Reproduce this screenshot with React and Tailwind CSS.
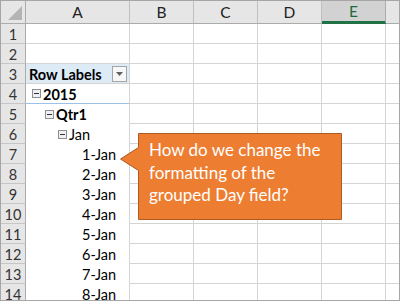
import React from "react";

const cols = ["A", "B", "C", "D", "E"];

const rowsA = {
  3: { text: "Row Labels", kind: "label" },
  4: { text: "2015", kind: "group", indent: 6, bold: true },
  5: { text: "Qtr1", kind: "group", indent: 19, bold: true },
  6: { text: "Jan", kind: "group", indent: 32 },
  7: { text: "1-Jan", indent: 56 },
  8: { text: "2-Jan", indent: 56 },
  9: { text: "3-Jan", indent: 56 },
  10: { text: "4-Jan", indent: 56 },
  11: { text: "5-Jan", indent: 56 },
  12: { text: "6-Jan", indent: 56 },
  13: { text: "7-Jan", indent: 56 },
  14: { text: "8-Jan", indent: 56 },
};

function MinusBox() {
  return (
    <span className="mr-[2px] flex h-[9px] w-[9px] items-center justify-center border border-[#8f8f8f] bg-[#eef0f4]">
      <span className="h-[1px] w-[5px] bg-[#333]" />
    </span>
  );
}

function FilterButton() {
  return (
    <span className="ml-auto mr-[2px] flex h-[16px] w-[15px] items-center justify-center border border-[#a6a6a6] bg-[#f7f7f7]">
      <svg width="7" height="4" viewBox="0 0 7 4">
        <polygon points="0,0 7,0 3.5,4" fill="#606060" />
      </svg>
    </span>
  );
}

function CellA({ row }) {
  const c = rowsA[row];
  if (!c) {
    return <div className="border-b border-r border-[#d4d4d4] bg-white" />;
  }
  if (c.kind === "label") {
    return (
      <div className="flex items-center border-b border-r border-[#d4d4d4] bg-[#ddebf7] pl-[3px] text-[14.5px] font-bold leading-[20px] text-black">
        <span className="pt-[2px]">{c.text}</span>
        <FilterButton />
      </div>
    );
  }
  return (
    <div
      className={
        "flex items-center border-r border-[#d4d4d4] bg-white text-[14.5px] leading-[20px] text-black " +
        (row === 4 ? "border-b border-b-[#9bc2e6]" : "")
      }
      style={{ paddingLeft: c.indent }}
    >
      {c.kind === "group" && <MinusBox />}
      <span className={"pt-[2px] " + (c.bold ? "font-bold" : "")}>{c.text}</span>
    </div>
  );
}

export default function App() {
  const rows = Array.from({ length: 14 }, (_, i) => i + 1);
  return (
    <div
      className="relative h-[301px] w-[400px] overflow-hidden border border-[#a6a6a6] bg-white"
      style={{ fontFamily: "Lato, 'Open Sans', sans-serif" }}
    >
      <div className="grid grid-cols-[25px_104px_64px_64px_64px_64px_1fr] grid-rows-[23px_repeat(14,20px)]">
        {/* header row */}
        <div className="relative border-b border-r border-[#ababab] bg-[#e6e6e6]">
          <svg className="absolute bottom-[3px] right-[3px]" width="14" height="14" viewBox="0 0 14 14">
            <polygon points="14,0 14,14 0,14" fill="#b4b4b4" />
          </svg>
        </div>
        {cols.map((c) => (
          <div
            key={c}
            className={
              "flex items-center justify-center border-r pt-[2px] text-[15.5px] " +
              (c === "E"
                ? "border-b-[3px] border-b-[#217346] border-r-[#ababab] bg-[#d2d2d2] text-[#1e6b3c]"
                : "border-b border-b-[#ababab] border-r-[#bfbfbf] bg-[#e6e6e6] text-[#222]")
            }
          >
            {c}
          </div>
        ))}
        <div className="border-b border-[#ababab] bg-[#e6e6e6]" />

        {rows.map((r) => (
          <React.Fragment key={r}>
            <div className="flex items-center justify-center border-b border-r border-b-[#c6c6c6] border-r-[#ababab] bg-[#e6e6e6] pt-[2px] text-[14.5px] text-[#333]">
              {r}
            </div>
            <CellA row={r} />
            <div className="border-b border-r border-[#d4d4d4]" />
            <div className="border-b border-r border-[#d4d4d4]" />
            <div className="border-b border-r border-[#d4d4d4]" />
            <div className="border-b border-r border-[#d4d4d4]" />
            <div className="border-b border-[#d4d4d4]" />
          </React.Fragment>
        ))}
      </div>

      {/* callout */}
      <div className="absolute left-[118px] top-[132px] h-[88px] w-[224px]">
        <svg className="absolute inset-0" width="224" height="88" viewBox="0 0 224 88">
          <polygon
            points="19.5,0.5 222.5,0.5 222.5,86.5 19.5,86.5 19.5,37.5 1.5,26 19.5,14.5"
            fill="#ed7d31"
            stroke="#ae5a21"
            strokeWidth="1"
          />
        </svg>
        <div className="absolute left-[30px] top-[6px] text-[17px] leading-[22.5px] text-white">
          How do we change the
          <br />
          formatting of the
          <br />
          grouped Day field?
        </div>
      </div>
    </div>
  );
}
